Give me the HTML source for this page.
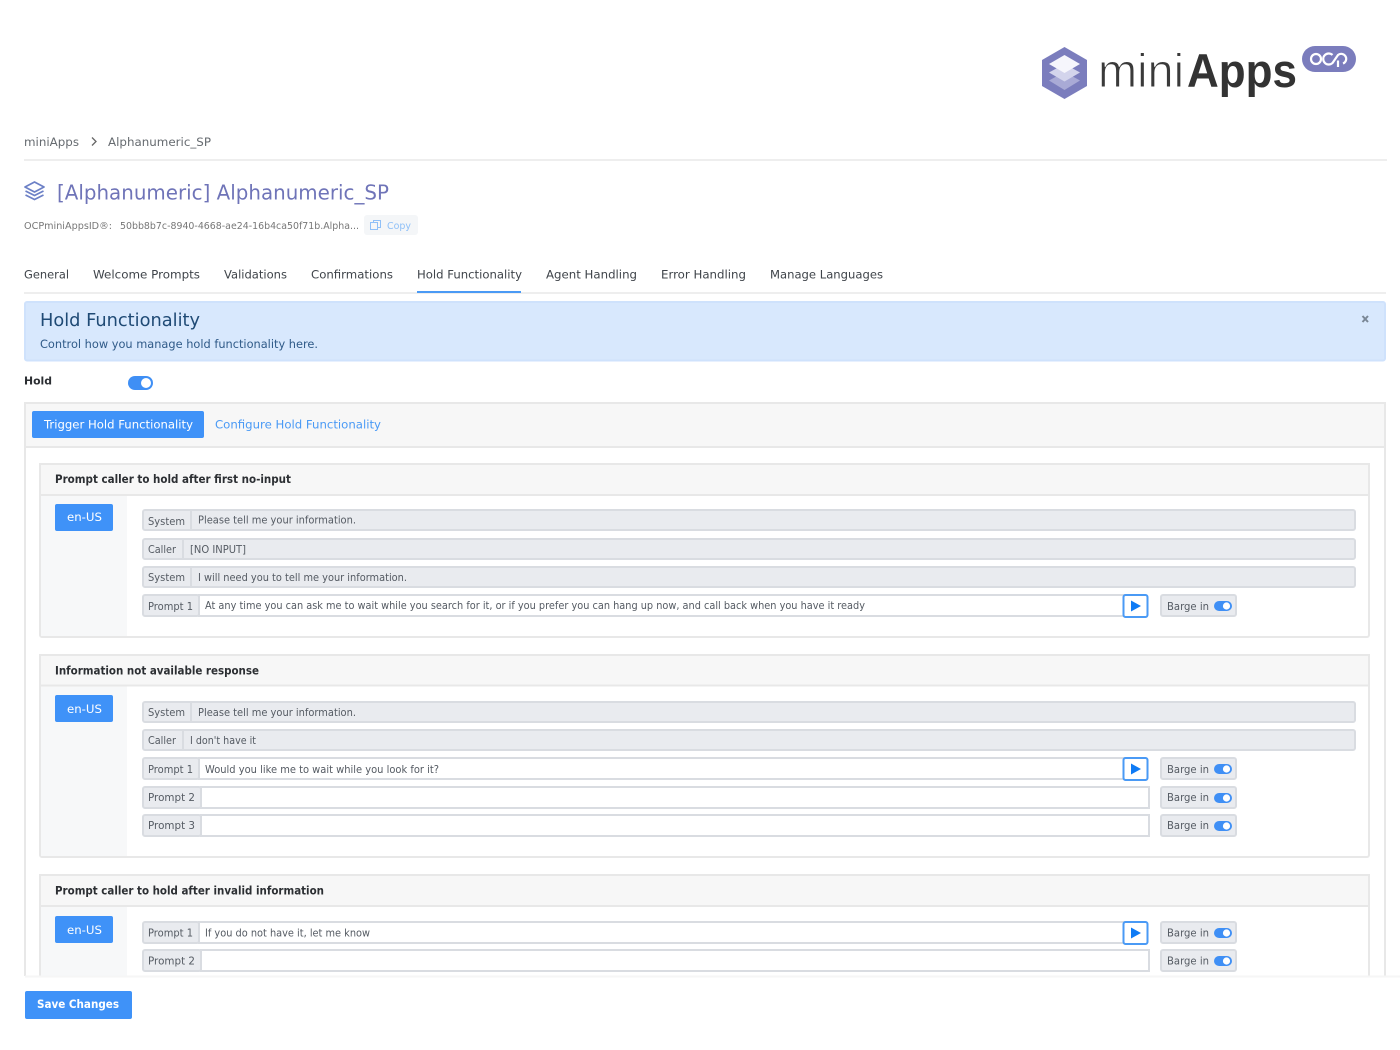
<!DOCTYPE html>
<html><head><meta charset="utf-8"><title>miniApps</title>
<style>
html,body{margin:0;padding:0;background:#fff;width:1400px;height:1050px;overflow:hidden}
svg{display:block;filter:blur(.35px)}
text{font-family:"DejaVu Sans","Liberation Sans",sans-serif;font-size:10.5px;fill:#555b63}
.b{font-weight:bold}
.d{fill:#4a4f55;font-size:11.5px}
.t{fill:#3f444a;font-size:11.5px}
.g{fill:#e9ebef;stroke:#d9dce1;stroke-width:2}
.w{fill:#fff;stroke:#d9dce1;stroke-width:2}
.l{stroke:#d9dce1;stroke-width:2}
.h{fill:#f7f7f7;stroke:#e8e8e8;stroke-width:2}
.btn{fill:#3f92f8}
.en{fill:#fff;font-size:11.5px}
.st{fill:#2c2f33;font-size:11.5px;font-weight:bold}
</style></head><body>
<svg width="1400" height="1050" viewBox="0 0 1400 1050" xmlns="http://www.w3.org/2000/svg">
<defs>
<g id="tg"><rect width="18" height="10" rx="5" fill="#3f8ff5"/><circle cx="12.5" cy="5" r="3.6" fill="#fff"/></g>
<g id="barge"><rect x="1161" y="0" width="75" height="21" rx="2" class="g"/><use href="#tg" x="1214" y="6"/></g>
<g id="play"><rect x="1123.5" y="0" width="24" height="22" rx="2" fill="#fff" stroke="#4a9af5" stroke-width="2"/><path d="M1131 5.500V16.500L1141 11Z" fill="#0f7bf5"/></g>
<clipPath id="cp"><rect x="0" y="395" width="1400" height="581"/></clipPath>
</defs>

<!-- logo -->
<path d="M1064.500 47L1087 60V86L1064.500 99L1042 86V60Z" fill="#7b7dbd"/>
<path d="M1064.500 72L1080 80.500L1064.500 90L1049 80.500Z" fill="#a9aad6"/>
<path d="M1064.500 64L1080 72.500L1064.500 81.500L1049 72.500Z" fill="#d3d4ec"/>
<path d="M1064.500 55L1080 64L1064.500 73L1049 64Z" fill="#f6f6fc"/>
<text x="1098" y="87" textLength="86" lengthAdjust="spacingAndGlyphs" style="font-family:'Liberation Sans',sans-serif;font-size:47px;fill:#3a3a3a;stroke:#fff;stroke-width:1px">mini</text>
<text x="1187" y="87" textLength="110" lengthAdjust="spacingAndGlyphs" style="font-family:'Liberation Sans',sans-serif;font-size:47px;font-weight:bold;fill:#333">Apps</text>
<rect x="1302" y="46" width="54" height="26" rx="13" fill="#7b7dbd"/>
<g fill="none" stroke="#fff" stroke-width="2.200">
<circle cx="1316" cy="59" r="5"/>
<path d="M1332.500 55A5.500 5.500 0 1 0 1332.500 63L1338 55A5 5 0 1 1 1343 63.500"/>
<path d="M1338 67V60.500"/>
</g>

<!-- breadcrumb -->
<text x="24" y="146" textLength="55" lengthAdjust="spacingAndGlyphs" class="d" style="fill:#666b70">miniApps</text>
<path d="M92 137.500L96 141.500L92 145.500" fill="none" stroke="#666" stroke-width="1.300"/>
<text x="108" y="146" textLength="103" lengthAdjust="spacingAndGlyphs" class="d" style="fill:#666b70">Alphanumeric_SP</text>
<rect x="24" y="159" width="1363" height="2" fill="#eeeeee"/>

<!-- title -->
<g fill="none" stroke="#6c80c6" stroke-width="1.700" stroke-linejoin="round">
<path d="M34.500 182L44 187L34.500 192L25 187Z"/>
<path d="M25.500 191L34.500 195.500L43.500 191"/>
<path d="M25.500 195L34.500 199.500L43.500 195"/>
</g>
<text x="57" y="199.500" textLength="332" lengthAdjust="spacingAndGlyphs" style="font-size:20px;fill:#6f74b8">[Alphanumeric] Alphanumeric_SP</text>
<text x="24" y="229" textLength="88" lengthAdjust="spacingAndGlyphs" style="font-size:9.500px;fill:#777">OCPminiAppsID®:</text>
<text x="120" y="229" textLength="239" lengthAdjust="spacingAndGlyphs" style="font-size:9.500px;fill:#777">50bb8b7c-8940-4668-ae24-16b4ca50f71b.Alpha...</text>
<rect x="364" y="215" width="54" height="20" rx="3" fill="#f4f6f8"/>
<g fill="none" stroke="#8fc0f8" stroke-width="1"><rect x="370.500" y="222.500" width="7" height="7"/><path d="M373.500 222V220.500H380.500V227.500H378"/></g>
<text x="387" y="229" textLength="24" lengthAdjust="spacingAndGlyphs" style="font-size:9.500px;fill:#8fc0f8">Copy</text>

<!-- tabs -->
<g>
<text class="t" x="24" y="278.500" textLength="45" lengthAdjust="spacingAndGlyphs">General</text>
<text class="t" x="93" y="278.500" textLength="107" lengthAdjust="spacingAndGlyphs">Welcome Prompts</text>
<text class="t" x="224" y="278.500" textLength="63" lengthAdjust="spacingAndGlyphs">Validations</text>
<text class="t" x="311" y="278.500" textLength="82" lengthAdjust="spacingAndGlyphs">Confirmations</text>
<text class="t" x="417" y="278.500" textLength="105" lengthAdjust="spacingAndGlyphs">Hold Functionality</text>
<text class="t" x="546" y="278.500" textLength="91" lengthAdjust="spacingAndGlyphs">Agent Handling</text>
<text class="t" x="661" y="278.500" textLength="85" lengthAdjust="spacingAndGlyphs">Error Handling</text>
<text class="t" x="770" y="278.500" textLength="113" lengthAdjust="spacingAndGlyphs">Manage Languages</text>
</g>
<rect x="24" y="292" width="1362" height="2" fill="#eeeeee"/>
<rect x="417" y="291" width="104" height="2" fill="#4a9af5"/>

<!-- alert -->
<rect x="25" y="302" width="1360" height="58.500" rx="2" fill="#d8e8fd" stroke="#cfe2fc" stroke-width="2"/>
<text x="40" y="326" textLength="160" lengthAdjust="spacingAndGlyphs" style="font-size:18px;fill:#1f4a75">Hold Functionality</text>
<text x="40" y="348" textLength="278" lengthAdjust="spacingAndGlyphs" style="font-size:11.500px;fill:#2f5a88">Control how you manage hold functionality here.</text>
<path d="M1362.500 316L1368 322M1368 316L1362.500 322" stroke="#7a8796" stroke-width="2"/>

<!-- hold -->
<text x="24" y="384.500" textLength="28" lengthAdjust="spacingAndGlyphs" class="b" style="font-size:11px;fill:#2c2f33">Hold</text>
<rect x="128" y="376" width="25" height="14" rx="7" fill="#3f8ff5"/><circle cx="146" cy="383" r="5" fill="#fff"/>

<g clip-path="url(#cp)">
<!-- main card -->
<rect x="25" y="403" width="1360" height="640" fill="#fff" stroke="#e8e8e8" stroke-width="2"/>
<rect x="26" y="404" width="1358" height="43" fill="#f7f7f7"/>
<rect x="26" y="446" width="1358" height="2" fill="#e8e8e8"/>
<rect x="32" y="411" width="172" height="27" rx="2" class="btn"/>
<text x="44" y="428.500" textLength="149" lengthAdjust="spacingAndGlyphs" style="font-size:11.500px;fill:#fff">Trigger Hold Functionality</text>
<text x="215" y="428.500" textLength="166" lengthAdjust="spacingAndGlyphs" style="font-size:11.500px;fill:#4a9af5">Configure Hold Functionality</text>

<!-- section 1 -->
<rect x="40" y="464" width="1329" height="173" rx="2" fill="#fff" stroke="#e8e8e8" stroke-width="2"/>
<rect x="41" y="495" width="86" height="141" fill="#f7f8f9"/>
<rect x="40" y="464" width="1329" height="31" class="h"/>
<text class="st" x="55" y="483" textLength="236" lengthAdjust="spacingAndGlyphs">Prompt caller to hold after first no-input</text>
<rect x="55" y="504" width="58" height="27" rx="2" class="btn"/>
<text class="en" x="67" y="521" textLength="35" lengthAdjust="spacingAndGlyphs">en-US</text>

<rect x="143" y="510" width="1212" height="20" rx="2" class="g"/><path d="M191 510V531" class="l"/>
<text x="148" y="525" textLength="37" lengthAdjust="spacingAndGlyphs">System</text>
<text x="198" y="523.500" textLength="158" lengthAdjust="spacingAndGlyphs">Please tell me your information.</text>
<rect x="143" y="539" width="1212" height="20" rx="2" class="g"/><path d="M183 539V559" class="l"/>
<text x="148" y="553" textLength="28" lengthAdjust="spacingAndGlyphs">Caller</text>
<text x="190" y="553" textLength="56" lengthAdjust="spacingAndGlyphs">[NO INPUT]</text>
<rect x="143" y="567" width="1212" height="20" rx="2" class="g"/><path d="M191 567V587" class="l"/>
<text x="148" y="581" textLength="37" lengthAdjust="spacingAndGlyphs">System</text>
<text x="198" y="581" textLength="209" lengthAdjust="spacingAndGlyphs">I will need you to tell me your information.</text>
<rect x="199" y="595" width="925" height="21" class="w"/>
<rect x="143" y="595" width="56" height="21" rx="2" class="g"/>
<text x="148" y="610" textLength="45" lengthAdjust="spacingAndGlyphs">Prompt 1</text>
<text x="205" y="609" textLength="660" lengthAdjust="spacingAndGlyphs">At any time you can ask me to wait while you search for it, or if you prefer you can hang up now, and call back when you have it ready</text>
<use href="#play" y="595"/><use href="#barge" y="595"/>
<text x="1167" y="610" textLength="42" lengthAdjust="spacingAndGlyphs">Barge in</text>

<!-- section 2 -->
<rect x="40" y="655" width="1329" height="202" rx="2" fill="#fff" stroke="#e8e8e8" stroke-width="2"/>
<rect x="41" y="686" width="86" height="170" fill="#f7f8f9"/>
<rect x="40" y="655" width="1329" height="30.500" class="h"/>
<text class="st" x="55" y="674.500" textLength="204" lengthAdjust="spacingAndGlyphs">Information not available response</text>
<rect x="55" y="695" width="58" height="27" rx="2" class="btn"/>
<text class="en" x="67" y="713" textLength="35" lengthAdjust="spacingAndGlyphs">en-US</text>

<rect x="143" y="702" width="1212" height="20" rx="2" class="g"/><path d="M191 702V722" class="l"/>
<text x="148" y="716" textLength="37" lengthAdjust="spacingAndGlyphs">System</text>
<text x="198" y="716" textLength="158" lengthAdjust="spacingAndGlyphs">Please tell me your information.</text>
<rect x="143" y="730" width="1212" height="20" rx="2" class="g"/><path d="M183 730V750" class="l"/>
<text x="148" y="744" textLength="28" lengthAdjust="spacingAndGlyphs">Caller</text>
<text x="190" y="744" textLength="66" lengthAdjust="spacingAndGlyphs">I don't have it</text>

<rect x="199" y="758" width="925" height="21" class="w"/>
<rect x="143" y="758" width="56" height="21" rx="2" class="g"/>
<text x="148" y="773" textLength="45" lengthAdjust="spacingAndGlyphs">Prompt 1</text>
<text x="205" y="773" textLength="234" lengthAdjust="spacingAndGlyphs">Would you like me to wait while you look for it?</text>
<use href="#play" y="758"/><use href="#barge" y="758"/>
<text x="1167" y="773" textLength="42" lengthAdjust="spacingAndGlyphs">Barge in</text>

<rect x="201" y="787" width="948" height="21" class="w"/>
<rect x="143" y="787" width="58" height="21" rx="2" class="g"/>
<text x="148" y="801" textLength="47" lengthAdjust="spacingAndGlyphs">Prompt 2</text>
<use href="#barge" y="787"/>
<text x="1167" y="801" textLength="42" lengthAdjust="spacingAndGlyphs">Barge in</text>

<rect x="201" y="815" width="948" height="21" class="w"/>
<rect x="143" y="815" width="58" height="21" rx="2" class="g"/>
<text x="148" y="829" textLength="47" lengthAdjust="spacingAndGlyphs">Prompt 3</text>
<use href="#barge" y="815"/>
<text x="1167" y="829" textLength="42" lengthAdjust="spacingAndGlyphs">Barge in</text>

<!-- section 3 -->
<rect x="40" y="875" width="1329" height="160" rx="2" fill="#fff" stroke="#e8e8e8" stroke-width="2"/>
<rect x="41" y="907" width="86" height="120" fill="#f7f8f9"/>
<rect x="40" y="875" width="1329" height="31" class="h"/>
<text class="st" x="55" y="894.500" textLength="269" lengthAdjust="spacingAndGlyphs">Prompt caller to hold after invalid information</text>
<rect x="55" y="916" width="58" height="27" rx="2" class="btn"/>
<text class="en" x="67" y="934" textLength="35" lengthAdjust="spacingAndGlyphs">en-US</text>

<rect x="199" y="922" width="925" height="21" class="w"/>
<rect x="143" y="922" width="56" height="21" rx="2" class="g"/>
<text x="148" y="936.500" textLength="45" lengthAdjust="spacingAndGlyphs">Prompt 1</text>
<text x="205" y="936.500" textLength="165" lengthAdjust="spacingAndGlyphs">If you do not have it, let me know</text>
<use href="#play" y="922"/><use href="#barge" y="922"/>
<text x="1167" y="936.500" textLength="42" lengthAdjust="spacingAndGlyphs">Barge in</text>

<rect x="201" y="950" width="948" height="21" class="w"/>
<rect x="143" y="950" width="58" height="21" rx="2" class="g"/>
<text x="148" y="964.500" textLength="47" lengthAdjust="spacingAndGlyphs">Prompt 2</text>
<use href="#barge" y="950"/>
<text x="1167" y="964.500" textLength="42" lengthAdjust="spacingAndGlyphs">Barge in</text>
</g>

<!-- footer -->
<rect x="25" y="975.500" width="1375" height="2" fill="#f6f6f6"/>
<rect x="25" y="991" width="107" height="28" rx="2" class="btn"/>
<text x="37" y="1008" textLength="82" lengthAdjust="spacingAndGlyphs" class="b" style="font-size:11.500px;fill:#fff">Save Changes</text>
</svg>
</body></html>
